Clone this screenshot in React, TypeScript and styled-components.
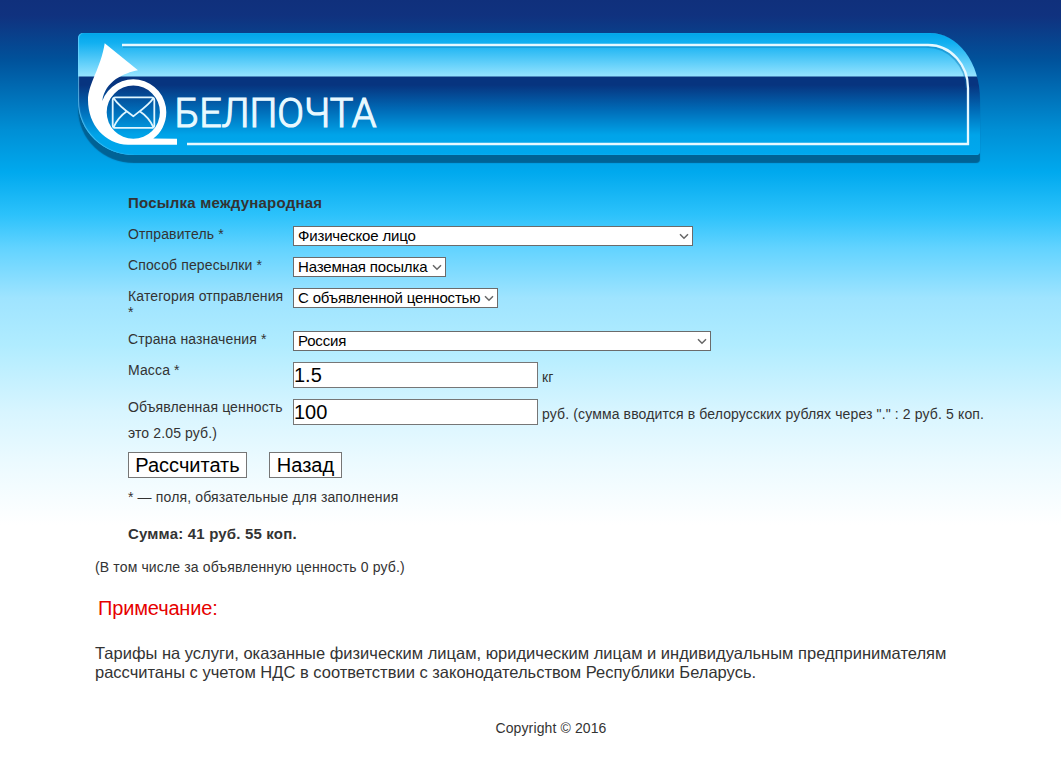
import React from "react";
import styled, { createGlobalStyle } from "styled-components";

const GlobalStyle = createGlobalStyle`
  * {
    box-sizing: border-box;
  }
  body {
    margin: 0;
    background: #fff;
    font-family: "Liberation Sans", Arial, sans-serif;
    color: #333;
  }
`;

const Page = styled.div`
  min-height: 761px;
  padding: 33px 0 0 78px;
  background: linear-gradient(
    to bottom,
    #10307c 0,
    #10327f 16px,
    #00529b 60px,
    #008fd5 130px,
    #00a9ee 172px,
    #2cc2fb 215px,
    #62d3ff 248px,
    #9fe4ff 298px,
    #b0ecff 345px,
    #d8f5ff 412px,
    #ebfaff 461px,
    #fff 525px
  );
`;

const Banner = styled.header`
  position: relative;
  width: 902px;
  height: 122px;
  border-radius: 5px 50px 4px 56px / 5px 66px 4px 54px;
  background: linear-gradient(
    to bottom,
    #00a5ea 0,
    #12b0f1 10px,
    #94e3ff 43px,
    #07347f 44px,
    #07347f 52px,
    #0069b5 76px,
    #00a4e9 102px,
    #00a8ee 122px
  );
  box-shadow: 0 8px 1px #006295, inset 1px 0 1px rgba(120, 215, 255, 0.7);
`;

const BannerArt = styled.svg`
  display: block;
  width: 902px;
  height: 122px;
`;

const Content = styled.main`
  width: 920px;
  padding-left: 17px;
`;

const Form = styled.form`
  padding: 40px 0 0 33px;
`;

const Title = styled.h1`
  margin: 0 0 15px;
  font-size: 15px;
  line-height: 16px;
  letter-spacing: 0.22px;
`;

const Row = styled.div<{ $height: number }>`
  height: ${(p) => p.$height}px;
  font-size: 14px;
  line-height: 16px;
  letter-spacing: 0.13px;
`;

const Label = styled.label`
  float: left;
  width: 165px;
  padding-right: 5px;
`;

const HintRest = styled.div`
  clear: left;
`;

const SelectBox = styled.span<{ $width: number }>`
  display: inline-flex;
  position: relative;
  width: ${(p) => p.$width}px;
  height: 20px;
  vertical-align: top;

  select {
    appearance: none;
    width: 100%;
    height: 100%;
    margin: 0;
    padding: 0 0 1px 4px;
    border: 1px solid #6b6b6b;
    border-radius: 0;
    background: #fff;
    color: #000;
    font: 15px "Liberation Sans", Arial, sans-serif;
    letter-spacing: -0.17px;
  }
  svg {
    position: absolute;
    right: 4px;
    top: 7px;
  }
`;

const Field = styled.input`
  width: 245px;
  height: 26px;
  margin: 0;
  padding: 0;
  border: 1px solid #767676;
  background: #fff;
  color: #000;
  font: 20px "Liberation Sans", Arial, sans-serif;
`;

const Buttons = styled.div`
  display: flex;
  gap: 22px;
`;

const Button = styled.button<{ $width: number }>`
  width: ${(p) => p.$width}px;
  height: 26px;
  padding: 0;
  border: 1px solid #767676;
  background: #fff;
  color: #000;
  font: 20px "Liberation Sans", Arial, sans-serif;
`;

const Required = styled.p`
  margin: 11px 0 0;
  font-size: 14px;
  line-height: 16px;
  letter-spacing: 0.14px;
`;

const Total = styled.p`
  margin: 21px 0 0;
  font-size: 15px;
  font-weight: bold;
  line-height: 16px;
  letter-spacing: 0.18px;
`;

const Included = styled.p`
  margin: 17px 0 0;
  font-size: 14px;
  line-height: 16px;
  letter-spacing: 0.14px;
`;

const NoteTitle = styled.h2`
  margin: 21px 0 0 3px;
  color: #e60000;
  font-size: 20px;
  font-weight: normal;
  line-height: 24px;
  letter-spacing: -0.15px;
`;

const Note = styled.p`
  margin: 24px 0 0;
  font-size: 16.5px;
  line-height: 19px;
`;

const Footer = styled.footer`
  margin: 38px 0 0;
  padding-left: 9px;
  font-size: 14px;
  line-height: 16px;
  letter-spacing: 0.12px;
  text-align: center;
`;

const Select = ({ width, value }: { width: number; value: string }) => (
  <SelectBox $width={width}>
    <select defaultValue={value}>
      <option>{value}</option>
    </select>
    <svg width="10" height="7" viewBox="0 0 10 7" fill="none">
      <path d="M1 1.3L5 5.2L9 1.3" stroke="#666" strokeWidth="1.5" />
    </svg>
  </SelectBox>
);

const Logo = () => (
  <BannerArt viewBox="78 33 902 122">
    <path
      d="M123 46.7H926C950 46.7 966.5 67 966.5 88"
      fill="none"
      stroke="#006fae"
      strokeOpacity="0.4"
      strokeWidth="2"
    />
    <path
      d="M122 45H928C952 45 968 66 968 88V144H187"
      fill="none"
      stroke="#e6f8ff"
      strokeWidth="2.3"
    />
    {/* post horn, the ring is cut out of the silhouette */}
    <path
      fill="#fff"
      fillRule="evenodd"
      d="M104.7 43.3L138 70.3C124 73 105 81 102.3 101A33 33 0 0 1 166.3 112.2C166.3 123 161 133 153.3 138.5L177 138.7V144.8H128C105 144 88 125 88 100C88 84 101 68 104.7 43.3ZM133.3 85.6A26.6 26.6 0 1 0 133.3 138.8A26.6 26.6 0 1 0 133.3 85.6Z"
    />
    <g fill="none" stroke="#e0f6ff" strokeWidth="1.8">
      <rect x="112.7" y="97.3" width="41.6" height="30.6" rx="3" />
      <path d="M113.5 98C118 105 126 111 133.3 116.2C140 111 149 105 153.5 98" />
      <path d="M113.5 127.3C116 122 120 116 126.5 111.5M153.5 127.3C151 122 147 116 140 111.5" />
    </g>
    <text
      x="174.5"
      y="126.7"
      fill="#e8f9ff"
      stroke="#e8f9ff"
      strokeWidth="1.2"
      fontFamily="Roboto, sans-serif"
      fontSize="40"
      fontWeight="300"
      textLength="202"
      lengthAdjust="spacingAndGlyphs"
    >
      БЕЛПОЧТА
    </text>
  </BannerArt>
);

const App = () => {
  return (
    <>
      <GlobalStyle />
      <Page>
        <Banner>
          <Logo />
        </Banner>
        <Content>
          <Form onSubmit={(e) => e.preventDefault()}>
            <Title>Посылка международная</Title>
            <Row $height={31}>
              <Label>Отправитель *</Label>
              <Select width={400} value="Физическое лицо" />
            </Row>
            <Row $height={31}>
              <Label>Способ пересылки *</Label>
              <Select width={153} value="Наземная посылка" />
            </Row>
            <Row $height={43}>
              <Label>Категория отправления *</Label>
              <Select width={205} value="С объявленной ценностью" />
            </Row>
            <Row $height={31}>
              <Label>Страна назначения *</Label>
              <Select width={418} value="Россия" />
            </Row>
            <Row $height={37}>
              <Label>Масса *</Label>
              <Field defaultValue="1.5" /> кг
            </Row>
            <Row $height={53}>
              <Label>Объявленная ценность</Label>
              <Field defaultValue="100" /> руб. (сумма вводится в белорусских
              рублях через "." : 2 руб. 5 коп.
              <HintRest>это 2.05 руб.)</HintRest>
            </Row>
            <Buttons>
              <Button $width={119}>Рассчитать</Button>
              <Button $width={73}>Назад</Button>
            </Buttons>
            <Required>* — поля, обязательные для заполнения</Required>
            <Total>Сумма: 41 руб. 55 коп.</Total>
          </Form>
          <Included>(В том числе за объявленную ценность 0 руб.)</Included>
          <NoteTitle>Примечание:</NoteTitle>
          <Note>
            Тарифы на услуги, оказанные физическим лицам, юридическим лицам и
            индивидуальным предпринимателям рассчитаны с учетом НДС в
            соответствии с законодательством Республики Беларусь.
          </Note>
          <Footer>Copyright © 2016</Footer>
        </Content>
      </Page>
    </>
  );
};

export default App;
